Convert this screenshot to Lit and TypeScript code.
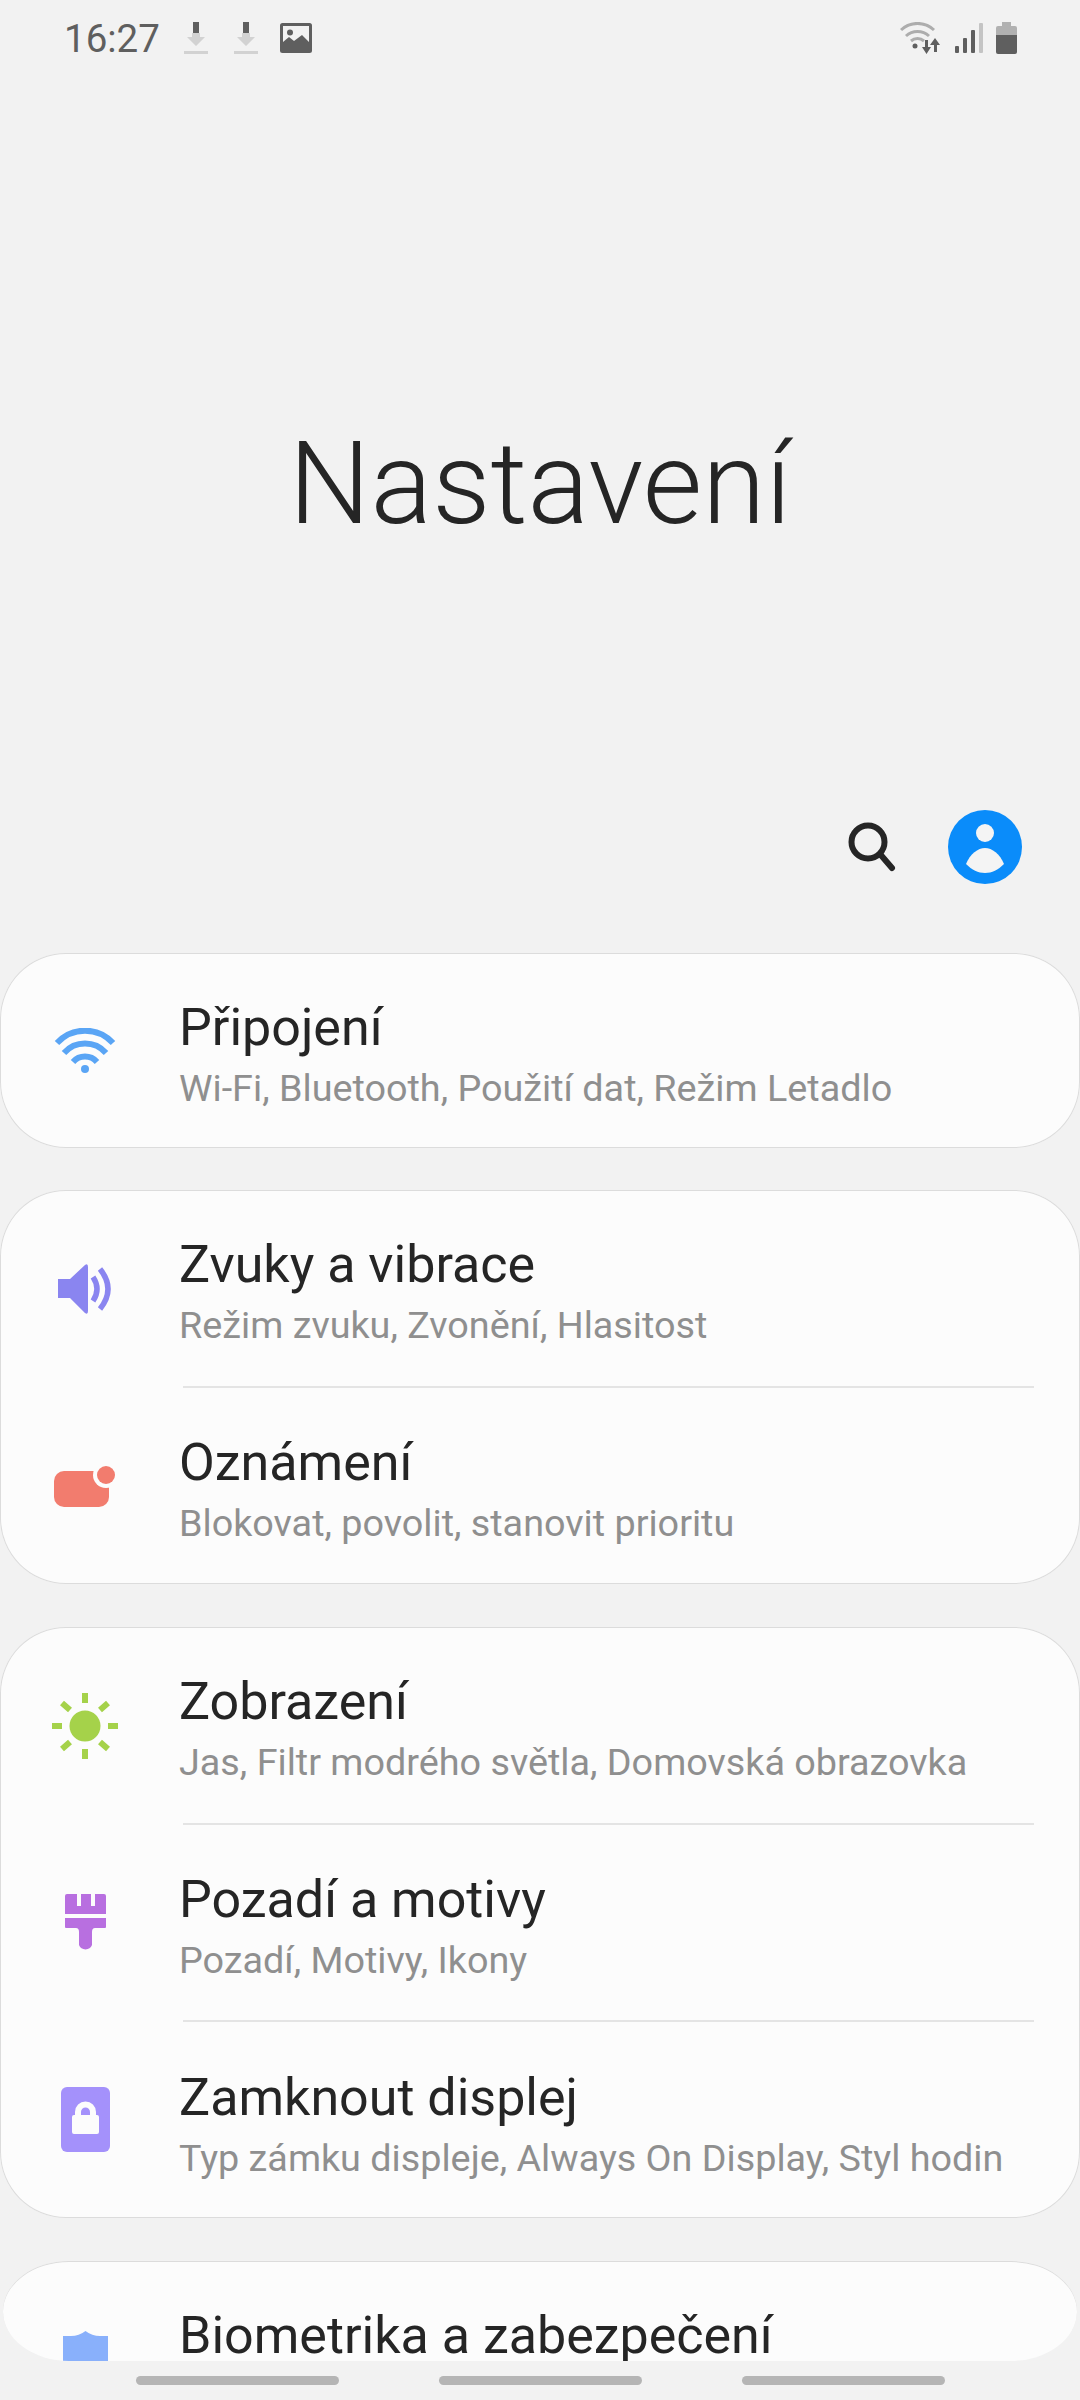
import { LitElement, html, css } from "lit";
import { customElement } from "lit/decorators.js";

type Row = { title: string; sub: string; icon: unknown };

const wifi = html`<svg width="62" height="46" viewBox="0 0 62 46">
  <g fill="none" stroke="#5aa5f5" stroke-width="6">
    <path d="M3 15A38 38 0 0 1 59 15" />
    <path d="M10 25A28 28 0 0 1 52 25" />
    <path d="M19 34A16 16 0 0 1 43 34" />
  </g>
  <circle cx="31" cy="41" r="4" fill="#5aa5f5" />
</svg>`;

const sound = html`<svg width="54" height="50" viewBox="0 0 54 50">
  <path fill="#8a85f0" d="M0 15H12L27 1Q30-1 30 3V47Q30 51 27 49L12 34H0Z" />
  <g fill="none" stroke="#8a85f0" stroke-width="5.500">
    <path d="M35 13Q43 25 35 37" />
    <path d="M42 5Q58 25 42 45" />
  </g>
</svg>`;

const notify = html`<svg width="62" height="42" viewBox="0 0 62 42">
  <rect x="0" y="6" width="55" height="36" rx="10" fill="#f27c6e" />
  <circle cx="52" cy="10" r="13" fill="#fcfcfc" />
  <circle cx="52" cy="10" r="9" fill="#f27c6e" />
</svg>`;

const sun = html`<svg width="68" height="66" viewBox="0 0 68 66">
  <circle cx="34" cy="33" r="15.5" fill="#a5d24a" />
  <g stroke="#a5d24a" stroke-width="6">
    <path d="M34 0V10M34 56V66M1 33H11M57 33H67" />
    <path d="M11 10L19 17M57 10L49 17M11 56L19 49M57 56L49 49" />
  </g>
</svg>`;

const brush = html`<svg width="41" height="58" viewBox="0 0 41 58">
  <path
    fill="#b86fe0"
    d="M2 0H12V12H16V0H26V12H30V0H39Q41 0 41 2V20H0V2Q0 0 2 0ZM0 24H41V33Q41 34 40 34H30Q27 34 27 38V51A7 7 0 0 1 14 51V38Q14 34 11 34H1Q0 34 0 33Z"
  />
</svg>`;

const lock = html`<svg width="49" height="65" viewBox="0 0 49 65">
  <rect width="49" height="65" rx="6" fill="#a491fb" />
  <path
    fill="#fcfcfc"
    fill-rule="evenodd"
    d="M14 28V25A10.500 10.500 0 0 1 35 25V28H36Q38 28 38 30V45Q38 47 36 47H13Q11 47 11 45V30Q11 28 13 28ZM20 28H29V25A4.500 4.500 0 0 0 20 25Z"
  />
</svg>`;

const shield = html`<svg width="45" height="58" viewBox="0 0 45 58">
  <path fill="#89b0fb" d="M0 5H8Q16 5 22.500 0Q29 5 37 5H45V36Q45 50 22.500 58Q0 50 0 36Z" />
</svg>`;

const download = html`<svg width="24" height="32" viewBox="0 0 24 32">
  <rect x="9" y="0" width="6" height="11" fill="#5f5f5f" />
  <path fill="#d2d2d2" d="M8 11H16V15H21L12 24L3 15H8Z" />
  <rect x="0" y="29" width="24" height="3" fill="#d2d2d2" />
</svg>`;

const picture = html`<svg width="32" height="30" viewBox="0 0 32 30">
  <rect width="32" height="30" rx="2.500" fill="#5f5f5f" />
  <rect x="3" y="3" width="26" height="24" fill="#f2f2f2" />
  <circle cx="10" cy="9.500" r="3" fill="#5f5f5f" />
  <path fill="#5f5f5f" d="M3 19L9 14L14 18L22 12L29 19V27H3Z" />
</svg>`;

const statusWifi = html`<svg width="42" height="32" viewBox="0 0 42 32">
  <g fill="none" stroke="#adadad" stroke-width="3">
    <path d="M1 8A24 24 0 0 1 34 8" />
    <path d="M6 14A17 17 0 0 1 29 14" />
    <path d="M11 19A10 10 0 0 1 24 19" />
  </g>
  <circle cx="15" cy="24" r="2.500" fill="#5f5f5f" />
  <path fill="#5f5f5f" d="M25 18H28V25H31L26.500 32L22 25H25ZM35 16L40 23H37V30H34V23H30Z" />
</svg>`;

const signal = html`<svg width="28" height="30" viewBox="0 0 28 30">
  <rect x="0" y="23" width="4" height="7" rx="1" fill="#5f5f5f" />
  <rect x="8" y="15" width="4" height="15" rx="1" fill="#5f5f5f" />
  <rect x="16" y="7" width="4" height="23" rx="1" fill="#5f5f5f" />
  <rect x="24" y="0" width="4" height="30" rx="1" fill="#c4c4c4" />
</svg>`;

const battery = html`<svg width="21" height="32" viewBox="0 0 21 32">
  <path fill="#b1b1b1" d="M6 0H15V4H19Q21 4 21 6V13H0V6Q0 4 2 4H6Z" />
  <path fill="#5f5f5f" d="M0 13H21V30Q21 32 19 32H2Q0 32 0 30Z" />
</svg>`;

const groups: Row[][] = [
  [{ title: "Připojení", sub: "Wi-Fi, Bluetooth, Použití dat, Režim Letadlo", icon: wifi }],
  [
    { title: "Zvuky a vibrace", sub: "Režim zvuku, Zvonění, Hlasitost", icon: sound },
    { title: "Oznámení", sub: "Blokovat, povolit, stanovit prioritu", icon: notify },
  ],
  [
    { title: "Zobrazení", sub: "Jas, Filtr modrého světla, Domovská obrazovka", icon: sun },
    { title: "Pozadí a motivy", sub: "Pozadí, Motivy, Ikony", icon: brush },
    { title: "Zamknout displej", sub: "Typ zámku displeje, Always On Display, Styl hodin", icon: lock },
  ],
];

@customElement("app-root")
export class AppRoot extends LitElement {
  static styles = css`
    :host {
      display: flex;
      flex-direction: column;
      width: 1080px;
      height: 2400px;
      overflow: hidden;
      background: #f2f2f2;
      font-family: Roboto, "Liberation Sans", sans-serif;
      color: #252525;
    }

    .status {
      height: 76px;
      box-sizing: border-box;
      display: flex;
      align-items: center;
      padding: 0 63px 0 64px;
      flex: none;
    }

    .time {
      font-size: 38.500px;
      color: #5f5f5f;
      margin-right: 24px;
    }

    .status-left {
      display: flex;
      align-items: center;
      gap: 26px;
    }

    .status-left svg:last-child {
      margin-left: -4px;
    }

    .status-right {
      margin-left: auto;
      display: flex;
      align-items: center;
      gap: 13px;
    }

    .hero {
      flex: none;
      padding-top: 338px;
      height: 140px;
      line-height: 140px;
      font-size: 115px;
      font-weight: 300;
      text-align: center;
    }

    .actions {
      flex: none;
      display: flex;
      justify-content: flex-end;
      align-items: center;
      gap: 49px;
      padding: 256px 58px 69px 0;
    }

    .list {
      flex: none;
      height: 1408px;
      overflow: hidden;
      display: flex;
      flex-direction: column;
      gap: 43px;
    }

    .card {
      flex: none;
      background: #fcfcfc;
      box-shadow: inset 0 0 0 1px #dcdcdc;
      border-radius: 66px;
    }

    .card.single {
      margin-bottom: -1px;
    }

    .card.single .row {
      height: 195px;
    }

    .card.last {
      height: 100px;
      margin: 0 3px;
      border-radius: 66px / 50px;
      box-shadow: inset 0 1px 0 #dcdcdc;
      overflow: hidden;
    }

    .card.last .icon {
      margin-left: 48px;
    }

    .row {
      height: 197px;
      box-sizing: border-box;
      display: flex;
      align-items: center;
      position: relative;
    }

    .row + .row::before {
      content: "";
      position: absolute;
      top: -1px;
      left: 183px;
      right: 46px;
      height: 2px;
      background: #e4e4e4;
    }

    .icon {
      flex: none;
      width: 68px;
      margin: 0 60px 0 51px;
      display: flex;
      justify-content: center;
    }

    .text {
      align-self: flex-start;
      padding-top: 45px;
    }

    .row + .row .text {
      padding-top: 46px;
    }

    .row + .row + .row .text {
      padding-top: 47px;
    }

    .title {
      font-size: 52px;
      line-height: 60px;
      color: #252525;
    }

    .sub {
      margin-top: 8px;
      font-size: 37.750px;
      line-height: 44px;
      color: #8f8f8f;
    }

    .nav {
      flex: 1;
      display: flex;
      justify-content: center;
      gap: 100px;
      padding-top: 15px;
    }

    .pill {
      width: 203px;
      height: 9px;
      border-radius: 5px;
      background: #b5b5b5;
    }
  `;

  private renderRow(row: Row) {
    return html`<div class="row">
      <div class="icon">${row.icon}</div>
      <div class="text">
        <div class="title">${row.title}</div>
        ${row.sub ? html`<div class="sub">${row.sub}</div>` : ""}
      </div>
    </div>`;
  }

  render() {
    return html`
      <div class="status">
        <span class="time">16:27</span>
        <div class="status-left">${download}${download}${picture}</div>
        <div class="status-right">${statusWifi}${signal}${battery}</div>
      </div>
      <div class="hero">Nastavení</div>
      <div class="actions">
        <svg width="52" height="52" viewBox="0 0 52 52">
          <circle cx="21" cy="21" r="16.500" fill="none" stroke="#252525" stroke-width="6" />
          <path d="M33 33L45 47" stroke="#252525" stroke-width="6" stroke-linecap="round" />
        </svg>
        <svg width="74" height="74" viewBox="0 0 74 74">
          <circle cx="37" cy="37" r="37" fill="#0a8cfa" />
          <circle cx="37" cy="23" r="9" fill="#f4f4f4" />
          <path
            fill="#f4f4f4"
            d="M18 54C22 44 30 38 37 38C44 38 52 44 56 54C50 60 44 63 37 63C30 63 24 60 18 54Z"
          />
        </svg>
      </div>
      <div class="list">
        ${groups.map(
          (g) => html`<div class="card ${g.length === 1 ? "single" : ""}">${g.map((r) => this.renderRow(r))}</div>`
        )}
        <div class="card last">
          ${this.renderRow({ title: "Biometrika a zabezpečení", sub: "", icon: shield })}
        </div>
      </div>
      <div class="nav">
        <div class="pill"></div>
        <div class="pill"></div>
        <div class="pill"></div>
      </div>
    `;
  }
}
